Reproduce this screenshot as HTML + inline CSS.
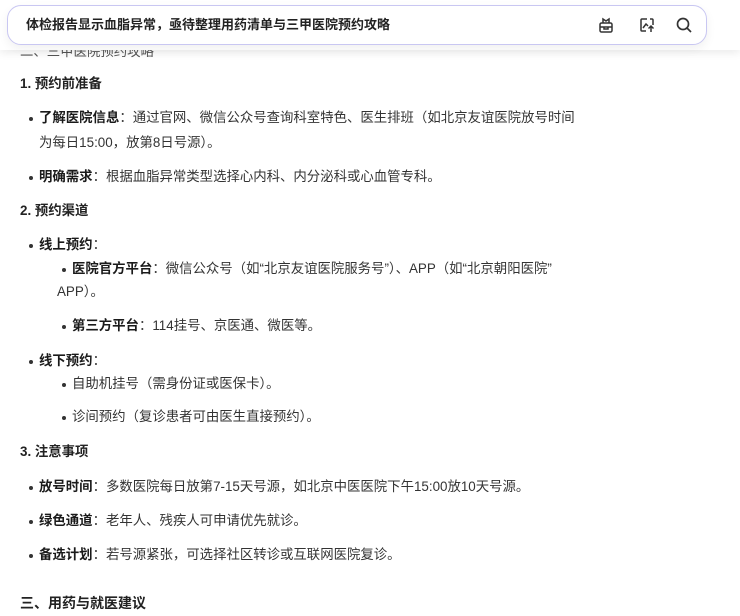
<!DOCTYPE html>
<html><head><meta charset="utf-8"><style>
*{margin:0;padding:0;box-sizing:border-box}
body{width:740px;height:616px;overflow:hidden;background:#fff;font-family:"Liberation Sans","Noto Sans CJK SC",sans-serif;font-size:13.4px;color:#333;position:relative}
.l{position:absolute;white-space:nowrap;line-height:18px;height:18px}
b{color:#1a1a1a;font-weight:bold}
.h{font-weight:bold;color:#222}
.d{position:absolute;width:4px;height:4px;border-radius:50%;background:#333}
.bar{position:absolute;left:7px;top:5px;width:700px;height:40px;border:1px solid #c9c7f2;border-radius:14px;background:#fff;box-shadow:0 4px 10px rgba(0,0,0,.06);z-index:2}
.top{position:absolute;left:0;top:0;width:740px;height:50px;background:#fff;z-index:1;box-shadow:0 3px 8px rgba(0,0,0,.08)}
</style></head><body>
<div class="l" style="left:20px;top:43px;color:#555">二、三甲医院预约攻略</div>
<div class="top"></div>
<div class="bar">
<div class="l" style="left:18px;top:10px;font-weight:bold;font-size:13px;color:#222">体检报告显示血脂异常，亟待整理用药清单与三甲医院预约攻略</div>
<svg style="position:absolute;left:589px;top:10px" width="18" height="18" viewBox="0 0 18 18" fill="none" stroke="#333" stroke-width="1.5"><rect x="3" y="7" width="12" height="9" rx="1.5"/><path d="M3 11h12M7 11v2h4v-2M6 7V3l3 2 3-2v4"/></svg>
<svg style="position:absolute;left:630px;top:10px" width="18" height="18" viewBox="0 0 18 18" fill="none" stroke="#333" stroke-width="1.5"><path d="M9 3H4a1 1 0 0 0-1 1v10a1 1 0 0 0 1 1h4M15 9V4a1 1 0 0 0-1-1h-2"/><path d="M5 12l3-4 2 2M13 16v-6M10.5 12.5L13 10l2.5 2.5"/></svg>
<svg style="position:absolute;left:667px;top:10px" width="18" height="18" viewBox="0 0 18 18" fill="none" stroke="#333" stroke-width="1.7"><circle cx="8" cy="8" r="5.5"/><path d="M12 12l4 4"/></svg>
</div>
<div class="l h" style="left:20px;top:75px">1. 预约前准备</div>
<div class="d" style="left:29px;top:117px"></div><div class="l" style="left:39px;top:109px"><b>了解医院信息</b>：通过官网、微信公众号查询科室特色、医生排班（如北京友谊医院放号时间</div>
<div class="l" style="left:39px;top:134px">为每日15:00，放第8日号源）。</div>
<div class="d" style="left:29px;top:176px"></div><div class="l" style="left:39px;top:168px"><b>明确需求</b>：根据血脂异常类型选择心内科、内分泌科或心血管专科。</div>
<div class="l h" style="left:20px;top:202px">2. 预约渠道</div>
<div class="d" style="left:29px;top:244px"></div><div class="l" style="left:39px;top:236px"><b>线上预约</b>：</div>
<div class="d" style="left:62px;top:268px"></div><div class="l" style="left:72px;top:260px"><b>医院官方平台</b>：微信公众号（如“北京友谊医院服务号”）、APP（如“北京朝阳医院”</div>
<div class="l" style="left:57px;top:283px">APP）。</div>
<div class="d" style="left:62px;top:325px"></div><div class="l" style="left:72px;top:317px"><b>第三方平台</b>：114挂号、京医通、微医等。</div>
<div class="d" style="left:29px;top:360px"></div><div class="l" style="left:39px;top:352px"><b>线下预约</b>：</div>
<div class="d" style="left:62px;top:383px"></div><div class="l" style="left:72px;top:375px">自助机挂号（需身份证或医保卡）。</div>
<div class="d" style="left:62px;top:416px"></div><div class="l" style="left:72px;top:408px">诊间预约（复诊患者可由医生直接预约）。</div>
<div class="l h" style="left:20px;top:443px">3. 注意事项</div>
<div class="d" style="left:29px;top:486px"></div><div class="l" style="left:39px;top:478px"><b>放号时间</b>：多数医院每日放第7-15天号源，如北京中医医院下午15:00放10天号源。</div>
<div class="d" style="left:29px;top:520px"></div><div class="l" style="left:39px;top:512px"><b>绿色通道</b>：老年人、残疾人可申请优先就诊。</div>
<div class="d" style="left:29px;top:554px"></div><div class="l" style="left:39px;top:546px"><b>备选计划</b>：若号源紧张，可选择社区转诊或互联网医院复诊。</div>
<div class="l h" style="left:20px;top:594px;font-size:14px">三、用药与就医建议</div>
</body></html>
